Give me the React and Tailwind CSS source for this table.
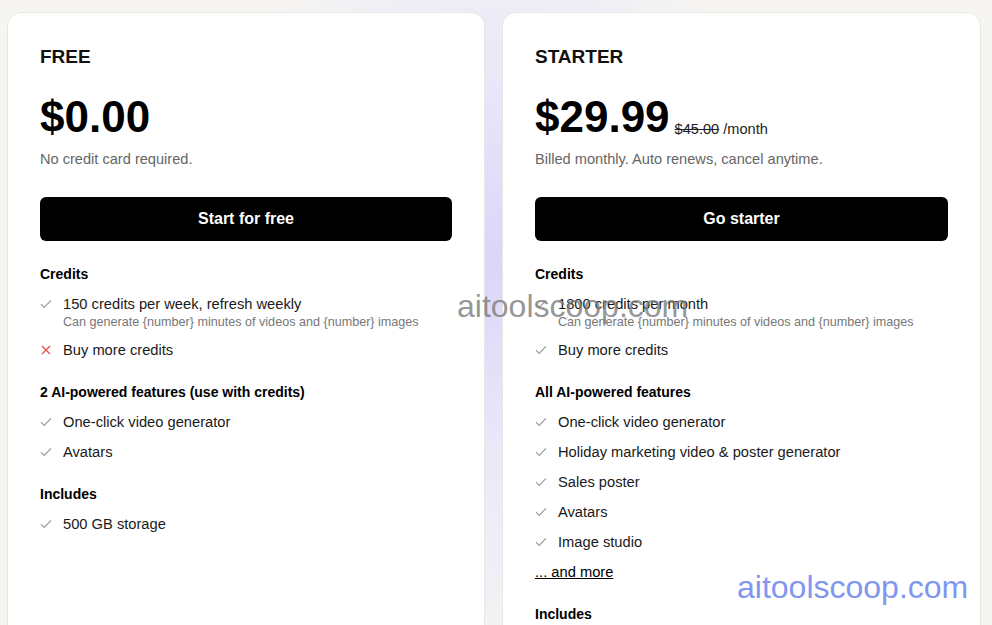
import React from "react";

const plans = [
  {
    name: "FREE",
    price: "$0.00",
    note: "No credit card required.",
    cta: "Start for free",
    sections: [
      {
        title: "Credits",
        items: [
          { label: "150 credits per week, refresh weekly", sub: "Can generate {number} minutes of videos and {number} images" },
          { label: "Buy more credits", off: true },
        ],
      },
      {
        title: "2 AI-powered features (use with credits)",
        items: [{ label: "One-click video generator" }, { label: "Avatars" }],
      },
      { title: "Includes", items: [{ label: "500 GB storage" }] },
    ],
  },
  {
    name: "STARTER",
    price: "$29.99",
    was: "$45.00",
    note: "Billed monthly. Auto renews, cancel anytime.",
    cta: "Go starter",
    sections: [
      {
        title: "Credits",
        items: [
          { label: "1800 credits per month", sub: "Can generate {number} minutes of videos and {number} images" },
          { label: "Buy more credits" },
        ],
      },
      {
        title: "All AI-powered features",
        items: [
          { label: "One-click video generator" },
          { label: "Holiday marketing video & poster generator" },
          { label: "Sales poster" },
          { label: "Avatars" },
          { label: "Image studio" },
        ],
        more: true,
      },
      { title: "Includes", items: [{ label: "2 TB storage" }] },
    ],
  },
];

function Check() {
  return (
    <svg width="12" height="10" viewBox="0 0 12 10" className="shrink-0 mt-[5px]">
      <path d="M1 5.2 L4.2 8.4 L11 1.4" fill="none" stroke="#9a9a9a" strokeWidth="1.2" />
    </svg>
  );
}

function Cross() {
  return (
    <svg width="12" height="10" viewBox="0 0 12 10" className="shrink-0 mt-[5px]">
      <path d="M2 1 L10 9 M10 1 L2 9" fill="none" stroke="#ec4b4b" strokeWidth="1.2" />
    </svg>
  );
}

function PlanCard({ plan }) {
  return (
    <div className="bg-white border border-[#e7e7e7] rounded-[14px] px-8 pt-[30px] pb-10">
      <div className="text-[19px] leading-7 font-bold text-[#111]">{plan.name}</div>

      <div className="mt-6 flex items-baseline gap-[5px]">
        <span className="text-[44px] leading-[44px] font-bold text-black">{plan.price}</span>
        {plan.was && (
          <span className="text-[14.6px] text-[#222] translate-y-[2px]">
            <span className="line-through">{plan.was}</span> /month
          </span>
        )}
      </div>
      <div className="mt-[10px] text-[14.6px] leading-5 text-[#666]">{plan.note}</div>

      <button className="mt-7 w-full h-11 rounded-md bg-black text-white text-[16px] font-bold">
        {plan.cta}
      </button>

      <div className="mt-[23px] flex flex-col gap-[22px]">
        {plan.sections.map((s) => (
          <div key={s.title}>
            <div className="text-[14px] leading-5 font-bold text-black">{s.title}</div>
            <ul className="mt-[10px] flex flex-col gap-[10px]">
              {s.items.map((it) => (
                <li key={it.label} className="flex gap-[11px]">
                  {it.off ? <Cross /> : <Check />}
                  <div>
                    <div className="text-[14.7px] leading-5 text-[#1a1a1a]">{it.label}</div>
                    {it.sub && <div className="text-[12.6px] leading-4 text-[#777]">{it.sub}</div>}
                  </div>
                </li>
              ))}
              {s.more && (
                <li className="text-[14.7px] leading-5 text-black underline">... and more</li>
              )}
            </ul>
          </div>
        ))}
      </div>
    </div>
  );
}

export default function App() {
  return (
    <div
      className="relative h-[625px] overflow-hidden bg-[#f6f5f2] bg-[radial-gradient(ellipse_260px_420px_at_494px_260px,#dcd5f9_0%,#ebe8f8_45%,#f6f5f2_100%)]"
      style={{ fontFamily: '"Liberation Sans", Arial, sans-serif' }}
    >
      <div className="grid grid-cols-[478px_479px] gap-[17px] pl-[7px] pr-[11px] pt-3">
        {plans.map((p) => (
          <PlanCard key={p.name} plan={p} />
        ))}
      </div>

      {/* watermarks */}
      <div className="absolute left-[457px] top-[288px] text-[32px] leading-9 text-[#7a7a7a]/80 pointer-events-none">
        aitoolscoop.com
      </div>
      <div className="absolute left-[737px] top-[569px] text-[32px] leading-9 text-[#8196ef] pointer-events-none">
        aitoolscoop.com
      </div>
    </div>
  );
}
